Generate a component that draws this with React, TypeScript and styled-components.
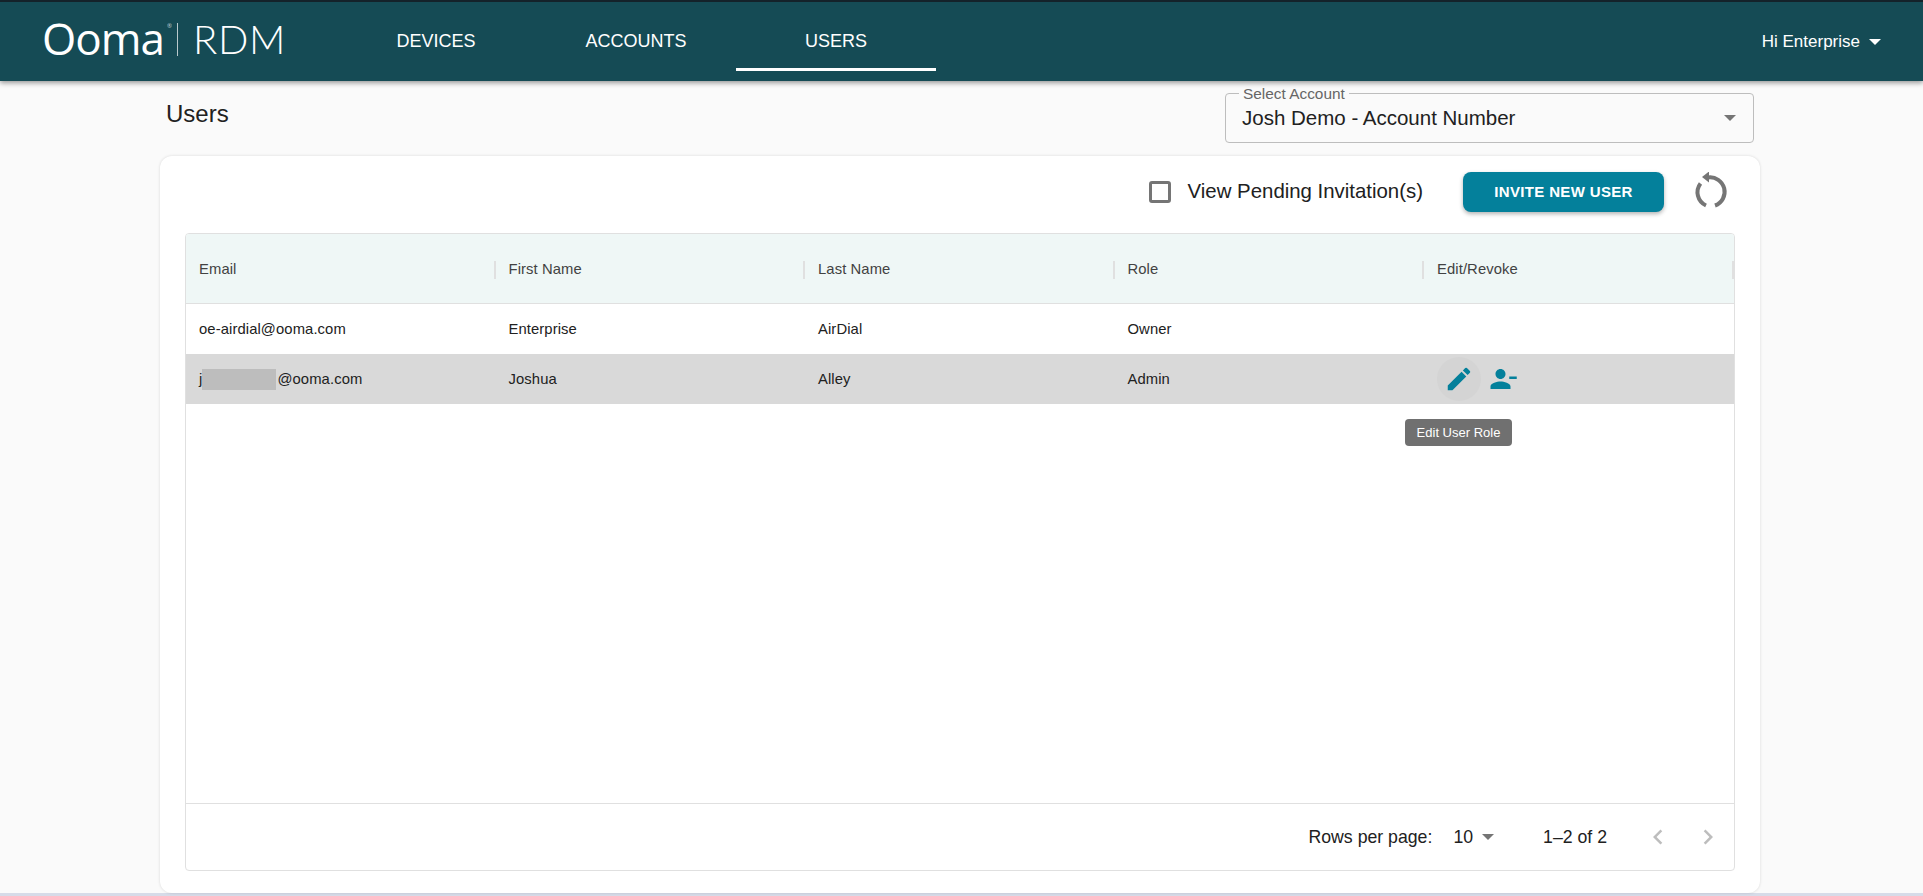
import React from "react";
import styled, { createGlobalStyle } from "styled-components";

const Global = createGlobalStyle`
  html, body { margin: 0; padding: 0; height: 100%; overflow: hidden; background: #fafafa; }
  body { font-family: "Liberation Sans", Arial, sans-serif; color: #212121; }
  #root { height: 896px; }
`;

const Page = styled.div`
  height: 896px; display: flex; flex-direction: column; box-sizing: border-box; position: relative;
  border-bottom: 3px solid #d6dbe8;
`;
const TopBar = styled.header`
  flex: none; height: 81px; box-sizing: border-box; border-top: 2px solid #14222a; background: #154b55;
  box-shadow: 0 2px 5px rgba(0,0,0,.4); display: flex; align-items: stretch; color: #fff; position: relative; z-index: 2;
  padding: 0 42px 0 42px;
`;
const Logo = styled.div`
  width: 294px; flex: none; display: flex; align-items: center; font-weight: 300; padding-bottom: 5px; box-sizing: border-box;
`;
const LogoMark = styled.span`
  font-family: "Open Sans", Inter, sans-serif; font-size: 44px; font-weight: 400; letter-spacing: -1px; line-height: 30px; position: relative;
  width: 136px; box-sizing: border-box; height: 33px; padding-bottom: 3px; display: flex; align-items: center;
  border-right: 1px solid rgba(255,255,255,.7);
`;
const Registered = styled.span`
  position: absolute; left: 125px; top: -1px; font-size: 6px; line-height: 8px; letter-spacing: 0; opacity: .7;
`;
const LogoProduct = styled.span`
  font-family: Lato, sans-serif; font-size: 40px; line-height: 40px; padding-left: 15px; letter-spacing: .6px;
`;
const Nav = styled.nav`display: flex;`;
const NavItem = styled.a<{ $active?: boolean }>`
  width: 200px; box-sizing: border-box; font-size: 18px; display: flex; align-items: center; justify-content: center;
  position: relative; text-transform: uppercase;
  ${p => p.$active ? `&::after { content: ""; position: absolute; left: 0; right: 0; bottom: 10px; height: 3px; background: #fff; }` : ""}
`;
const UserMenu = styled.div`margin-left: auto; display: flex; align-items: center; gap: 9px; font-size: 17px;`;
const Caret = styled.span<{ $c: string }>`
  width: 0; height: 0; border-left: 6px solid transparent; border-right: 6px solid transparent; border-top: 6px solid ${p => p.$c};
`;
const TitleRow = styled.div`
  flex: none; height: 75px; box-sizing: border-box; display: flex; justify-content: space-between; padding: 12px 169px 0 166px;
`;
const Title = styled.h1`margin: 0; font-size: 24px; font-weight: 400; padding-top: 7px; line-height: 28px; height: 28px;`;
const SelectBox = styled.div`
  width: 529px; height: 50px; box-sizing: border-box; border: 1px solid #bdbdbd; border-radius: 4px; position: relative;
  display: flex; align-items: center; justify-content: space-between; padding: 0 17px 0 16px; font-size: 20.5px;
`;
const SelectLabel = styled.span`
  position: absolute; left: 13px; top: -8px; padding: 0 4px; background: #fafafa; font-size: 15.4px; line-height: 15px; color: #666;
`;
const Card = styled.main`
  flex: 1; margin: 0 163px 0 160px; background: #fff; border-radius: 12px; box-shadow: 0 0 3px rgba(0,0,0,.14);
  padding: 0 25px 22px 25px; display: flex; flex-direction: column; min-height: 0;
`;
const Toolbar = styled.div`
  flex: none; height: 77px; box-sizing: border-box; padding-bottom: 6px; display: flex; align-items: center; justify-content: flex-end;
`;
const CheckLabel = styled.label`display: flex; align-items: center; font-size: 20.4px; gap: 17px; margin-right: 40px;`;
const CheckBox = styled.span`
  width: 22px; height: 22px; box-sizing: border-box; border: 3px solid #757575; border-radius: 3px; display: block;
`;
const InviteButton = styled.button`
  width: 201px; height: 40px; border: 0; border-radius: 8px; background: #04809b; color: #fff; font: 700 15px "Liberation Sans", sans-serif;
  letter-spacing: .35px; box-shadow: 0 2px 4px rgba(0,0,0,.3);
`;
const RefreshIcon = styled.svg`
  width: 40px; height: 40px; margin: 0 5px 0 26px; display: block;
  path { fill: none; stroke: #757575; stroke-width: 4; }
  polygon { fill: #757575; }
`;
const TableFrame = styled.section`
  flex: 1; min-height: 0; border: 1px solid #e0e0e0; border-radius: 4px; display: flex; flex-direction: column; overflow: hidden;
`;
const Row = styled.div<{ $selected?: boolean }>`
  flex: none; height: 50px; box-sizing: border-box; display: grid; grid-template-columns: repeat(5, 309.5px); align-items: center; font-size: 14.8px;
  letter-spacing: .1px; background: ${p => p.$selected ? "#d9d9d9" : "transparent"};
`;
const HeadRow = styled(Row)`
  height: 70px; background: #eff7f6; border-bottom: 1px solid #e0e0e0; color: #424242;
`;
const Cell = styled.div`padding-left: 13px; position: relative; display: flex; align-items: center;`;
const HeadCell = styled(Cell)`
  &::after { content: ""; position: absolute; right: 0; top: 0; height: 18px; width: 2px; background: #e0e0e0; }
`;
const Redacted = styled.span`
  display: inline-block; width: 74px; height: 21px; background: #bdbdbd; margin-right: 1px;
`;
const RowIcon = styled.button<{ $hover?: boolean }>`
  width: 44px; height: 44px; padding: 0; border: 0; border-radius: 50%; background: ${p => p.$hover ? "#d4d4d4" : "transparent"};
  display: flex; align-items: center; justify-content: center;
  svg { width: 30px; height: 30px; fill: #04809b; display: block; }
`;
const Tooltip = styled.div`
  position: absolute; left: 1405px; top: 419px; width: 107px; height: 27px; background: #707070; color: #fff; border-radius: 4px;
  font-size: 13px; display: flex; align-items: center; justify-content: center; z-index: 3;
`;
const Spacer = styled.div`flex: 1;`;
const Footer = styled.div`
  flex: none; height: 67px; box-sizing: border-box; border-top: 1px solid #e0e0e0; display: flex; align-items: center; justify-content: flex-end; font-size: 17.7px; padding-right: 11px;
`;
const RowsLabel = styled.span`margin-right: 21px;`;
const PageSize = styled.span`display: flex; align-items: center; gap: 9px; margin-right: 49px;`;
const PageRange = styled.span`margin-right: 36px;`;
const Chevron = styled.svg`width: 30px; height: 30px; fill: #bdbdbd; display: block; & + & { margin-left: 20px; }`;

const users = [
  { first: "Enterprise", last: "AirDial", role: "Owner" },
  { first: "Joshua", last: "Alley", role: "Admin" },
];

export default function App() {
  return (
    <Page>
      <Global />
      <TopBar>
        <Logo>
          <LogoMark>Ooma<Registered>®</Registered></LogoMark>
          <LogoProduct>RDM</LogoProduct>
        </Logo>
        <Nav>
          <NavItem>Devices</NavItem>
          <NavItem>Accounts</NavItem>
          <NavItem $active>Users</NavItem>
        </Nav>
        <UserMenu>Hi Enterprise <Caret $c="#fff" /></UserMenu>
      </TopBar>
      <TitleRow>
        <Title>Users</Title>
        <SelectBox>
          <SelectLabel>Select Account</SelectLabel>
          Josh Demo - Account Number
          <Caret $c="#757575" />
        </SelectBox>
      </TitleRow>
      <Card>
        <Toolbar>
          <CheckLabel><CheckBox />View Pending Invitation(s)</CheckLabel>
          <InviteButton>INVITE NEW USER</InviteButton>
          <RefreshIcon viewBox="10 12 40 40">
            <path d="M28 17.5A14.5 14.5 0 0 1 35 45.5" />
            <path d="M26 45.5A14.5 14.5 0 0 1 20.5 23.5" />
            <polygon points="22,17 29,11.5 29,22.5" />
          </RefreshIcon>
        </Toolbar>
        <TableFrame>
          <HeadRow>
            <HeadCell>Email</HeadCell>
            <HeadCell>First Name</HeadCell>
            <HeadCell>Last Name</HeadCell>
            <HeadCell>Role</HeadCell>
            <HeadCell>Edit/Revoke</HeadCell>
          </HeadRow>
          <Row>
            <Cell>oe-airdial@ooma.com</Cell>
            <Cell>{users[0].first}</Cell>
            <Cell>{users[0].last}</Cell>
            <Cell>{users[0].role}</Cell>
            <Cell />
          </Row>
          <Row $selected>
            <Cell>j<Redacted />@ooma.com</Cell>
            <Cell>{users[1].first}</Cell>
            <Cell>{users[1].last}</Cell>
            <Cell>{users[1].role}</Cell>
            <Cell>
              <RowIcon $hover aria-label="Edit"><svg viewBox="0 0 24 24"><path d="M3 17.25V21h3.75L17.81 9.94l-3.75-3.75L3 17.25zM20.71 7.04c.39-.39.39-1.02 0-1.41l-2.34-2.34a.9959.9959 0 0 0-1.41 0l-1.83 1.83 3.75 3.75 1.83-1.83z"/></svg></RowIcon>
              <RowIcon aria-label="Revoke"><svg viewBox="0 0 24 24"><path d="M14 8c0-2.21-1.79-4-4-4S6 5.79 6 8s1.79 4 4 4 4-1.79 4-4zm3 2v2h6v-2h-6zM2 18v2h16v-2c0-2.66-5.33-4-8-4s-8 1.34-8 4z"/></svg></RowIcon>
            </Cell>
          </Row>
          <Spacer />
          <Footer>
            <RowsLabel>Rows per page:</RowsLabel>
            <PageSize>10 <Caret $c="#757575" /></PageSize>
            <PageRange>1–2 of 2</PageRange>
            <Chevron viewBox="0 0 24 24"><path d="M15.41 7.41 14 6l-6 6 6 6 1.41-1.41L10.83 12z"/></Chevron>
            <Chevron viewBox="0 0 24 24"><path d="M10 6 8.59 7.41 13.17 12l-4.58 4.59L10 18l6-6z"/></Chevron>
          </Footer>
        </TableFrame>
      </Card>
      <Tooltip>Edit User Role</Tooltip>
    </Page>
  );
}
